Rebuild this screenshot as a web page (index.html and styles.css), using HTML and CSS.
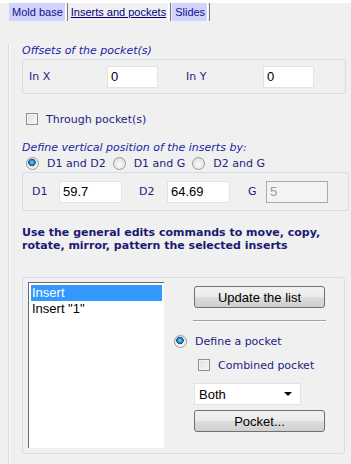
FILE: index.html
```html
<!DOCTYPE html>
<html lang="en">
<head>
    <meta charset="UTF-8">
    <title>Inserts and pockets</title>
    <link rel="stylesheet" href="styles.css">
</head>
<body>
    <div class="tabs">
        <span class="tab">Mold base</span>
        <span class="tab-sep"></span>
        <span class="tab active">Inserts and pockets</span>
        <span class="tab-sep"></span>
        <span class="tab">Slides</span>
        <span class="tab-sep"></span>
    </div>
    <div class="panel">
        <div class="caption cap-offsets">Offsets of the pocket(s)</div>
        <div class="group group-offsets">
            <span class="lbl lbl-x">In X</span>
            <span class="field w50">0</span>
            <span class="lbl lbl-y">In Y</span>
            <span class="field w50">0</span>
        </div>

        <div class="check-row through">
            <span class="check"></span>
            <span class="lbl">Through pocket(s)</span>
        </div>

        <div class="caption cap-define">Define vertical position of the inserts by:</div>
        <div class="radio-row">
            <span class="radio on"></span><span class="lbl r1">D1 and D2</span>
            <span class="radio"></span><span class="lbl r2">D1 and G</span>
            <span class="radio"></span><span class="lbl">D2 and G</span>
        </div>
        <div class="group group-dims">
            <span class="lbl lbl-d1">D1</span>
            <span class="field w62">59.7</span>
            <span class="lbl lbl-d2">D2</span>
            <span class="field w62">64.69</span>
            <span class="lbl lbl-g">G</span>
            <span class="field w62 disabled">5</span>
        </div>

        <p class="note">Use the general edits commands to move, copy,<br>rotate, mirror, pattern the selected inserts</p>

        <div class="group group-list">
            <div class="listbox">
                <div class="item selected">Insert</div>
                <div class="item">Insert "1"</div>
            </div>
            <div class="side">
                <button class="btn">Update the list</button>
                <div class="rule"></div>
                <div class="radio-row pocket">
                    <span class="radio on"></span><span class="lbl">Define a pocket</span>
                </div>
                <div class="check-row combined">
                    <span class="check"></span>
                    <span class="lbl">Combined pocket</span>
                </div>
                <div class="combo"><span>Both</span><span class="arrow"></span></div>
                <button class="btn">Pocket...</button>
            </div>
        </div>
    </div>
</body>
</html>
```

FILE: styles.css
```css
body{margin:0;background:#f0f0f0;font-family:"DejaVu Sans",Verdana,sans-serif;font-size:11px;width:351px;height:464px;overflow:hidden}
.tabs{display:flex;align-items:stretch;height:18px;padding-left:9px;background:#f0f0f0;border-top:3px solid #fff}
.tab{display:flex;align-items:center;padding:0 2px 0 3px;background:#d2d2ff;color:#10108a;font-family:"Liberation Sans",Arial,sans-serif;font-size:11px;height:18px}
.tab.active{background:#f0f0f0;color:#000080;text-decoration:underline;padding:0 2px 2px}
.tab-sep{width:1px;border-left:1px solid #fff;border-right:1px solid #7a7a7a;margin:0 1px 0 0}
.panel{margin-left:9px;border-left:1px solid #fafafa;box-shadow:-1px 0 0 #dcdcdc;height:443px;padding:0 0 0 12px}
.lbl{color:#1d1d82;white-space:nowrap}
.caption{font-style:italic;color:#2323a0}
.cap-offsets{margin-top:23px;height:14px;line-height:14px}
.group{border:1px solid #d5dde3;border-radius:3px;width:316px;box-sizing:content-box;display:flex;align-items:center}
.group-offsets{margin-top:1px;height:33px;padding-left:6px}
.lbl-x{width:78px}
.lbl-y{width:77px;margin-left:28px}
.field{background:#fff;border:1px solid #e3e3e3;height:20px;box-sizing:content-box;font-family:"Liberation Sans",Arial,sans-serif;font-size:13px;line-height:20px;padding-left:3px;color:#000}
.w50{width:46px}
.w62{width:58px}
.field.disabled{border-color:#ababab;background:#f4f4f4;color:#9a9a9a;width:57px}
.check-row{display:flex;align-items:center}
.through{margin-top:18px;padding-left:4px;height:14px}
.check{width:10px;height:10px;border:1px solid #8e8f8f;background:linear-gradient(135deg,#dcdcdc,#fafafa);box-shadow:inset 0 0 0 1px #f4f4f4;margin-right:8px}
.cap-define{margin-top:15px;height:14px;line-height:14px}
.radio-row{display:flex;align-items:center;height:14px;margin-top:1px;padding-left:4px}
.radio{width:11px;height:11px;border-radius:50%;border:1px solid #9a9a9a;background:radial-gradient(circle at 50% 60%,#fbfbfb,#d8d8d8);margin-right:8px;box-sizing:content-box}
.radio.on{background:radial-gradient(circle at 45% 40%,#7fd8ff 0,#1d80b8 2.5px,#0b4f7a 3.5px,#e6e6e6 4px,#f4f4f4 6px)}
.r1{margin-right:7px}
.r2{margin-right:7px}
.group-dims{margin-top:2px;height:37px;padding-left:9px}
.lbl-d1{width:27px}
.lbl-d2{width:28px;margin-left:17px}
.lbl-g{width:18px;margin-left:18px}
.note{margin:15px 0 0;font-weight:bold;color:#1a1a70;line-height:13px;font-size:11px}
.group-list{margin-top:25px;height:175px;align-items:flex-start;padding-left:5px}
.listbox{margin-top:4px;width:131px;height:163px;background:#fff;border-left:1px solid #6a6a6a;border-top:1px solid #6a6a6a;padding:2px 2px 0 2px;font-family:"Liberation Sans",Arial,sans-serif;font-size:13px}
.item{height:16px;line-height:16px;padding-left:1px;color:#000}
.item.selected{background:#3399ff;color:#fff}
.side{display:flex;flex-direction:column;margin-left:10px;padding-top:8px}
.btn{margin-left:20px;width:131px;height:22px;border:1px solid #707070;border-radius:3px;background:linear-gradient(#f2f2f2 0,#ebebeb 50%,#dddddd 51%,#cfcfcf 100%);font-family:"Liberation Sans",Arial,sans-serif;font-size:13px;color:#000;padding:0}
.rule{margin:12px 0 0 19px;width:133px;height:1px;background:#a0a0a0;border-bottom:1px solid #fff}
.pocket{margin-top:12px;padding-left:0}
.combined{margin-top:10px;padding-left:24px;height:14px}
.combo{margin:11px 0 0 20px;width:101px;height:20px;background:#fff;border:1px solid #e3e3e3;display:flex;align-items:center;justify-content:space-between;padding:0 0 0 4px;font-family:"Liberation Sans",Arial,sans-serif;font-size:13px}
.arrow{width:0;height:0;border-left:4px solid transparent;border-right:4px solid transparent;border-top:4px solid #000;margin-right:8px}
.combo + .btn{margin-top:5px}
```
